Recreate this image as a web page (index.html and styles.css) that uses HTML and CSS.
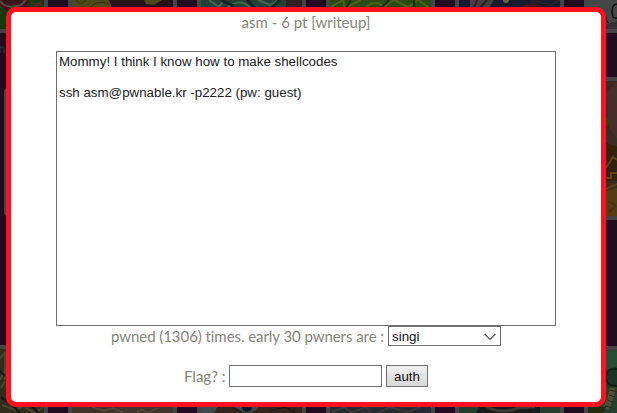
FILE: index.html
```html
<!DOCTYPE html>
<html lang="en">
<head>
<meta charset="utf-8">
<title>asm</title>
<link rel="stylesheet" href="styles.css">
</head>
<body>
<svg class="backdrop" width="617" height="413" viewBox="0 0 617 413" aria-hidden="true">
  <rect width="617" height="413" fill="#210c20"/>
  <g fill="#454345">
    <path d="M0 0h48v33H0zM68 0h109v33H68zM197 0h109v33H197zM326 0h109v33H326zM455 0h109v33H455zM584 0h33v33h-33zM584 77h33v143h-33z"/>
    <path d="M0 345h48v68H0zM68 345h109v68H68zM197 345h109v68H197zM326 345h109v68H326zM455 345h109v68H455zM584 346h33v67h-33z"/>
    <rect x="4" y="88" width="12" height="128" rx="4"/>
  </g>
  <path fill="#173a0c" d="M0 0h44v29H0z"/>
  <path fill="#3a1517" d="M0 0h29l-3 9-9 4L3 9 0 4z"/>
  <path d="M0 1l4 4 7 2 10-2 5-5" fill="none" stroke="#5d4541" stroke-width="2"/>
  <path d="M31 2l4 3 7-4M33 7l9-3" fill="none" stroke="#4e2920" stroke-width="2"/>
  <path fill="#271018" d="M72 0h101v8H72z"/>
  <path fill="#504719" d="M72 0h37l3 8H72zM144 0h18l-8 5-8-1z"/>
  <path d="M76 0q4 7 10 0M91 7q3-6 17-4" fill="none" stroke="#31300e"/>
  <path fill="#244137" d="M201 0h101v8H201z"/>
  <path d="M209 0l10 7 5-7M228 7q12-9 22 0M258 0l12 5 9-5" fill="none" stroke="#486450" stroke-width="2"/>
  <path d="M221 0l13 6M247 0l8 8M272 8l8-8" stroke="#142521" stroke-width="3"/>
  <path fill="#302024" d="M286 0h16v8h-16z"/>
  <path fill="#294d11" d="M330 0h101v8H330z"/>
  <path d="M331 7l12-7 2 8 16-8M366 7q9-8 18 0l10-7 14 7 10-7 10 7" fill="none" stroke="#4f5f17" stroke-width="2"/>
  <path d="M351 0l-5 8M389 0l-8 8M414 0v8" stroke="#172e0c" stroke-width="2"/>
  <path fill="#17192c" d="M459 0h101v8H459z"/>
  <path fill="#4b3b40" d="M470 0h24l-5 8h-19z"/>
  <path fill="#3d1819" d="M518 8l15-6 14 6z"/>
  <path d="M477 0l-3 8M487 0l-7 8M531 0l20 5 9-5" stroke="#26202b" stroke-width="2" fill="none"/>
  <circle cx="506" cy="0" r="3" fill="#64614e"/>
  <path fill="#454746" d="M588 0h29v29h-29z"/>
  <path fill="#303332" d="M588 23q12 4 29-2v8h-29z"/>
  <path d="M617 4q-5 0-5 8 0 7 5 6M606 17q0 6 3 5" fill="none" stroke="#111" stroke-width="1.5"/>
  <path fill="#382c23" d="M588 81h29v135h-29z"/>
  <path fill="#472e2a" d="M606 92l11-10v57l-8-11z"/>
  <path fill="#29401a" d="M606 116l4 4v5h-4z"/>
  <path fill="#34200f" d="M606 143l11 4v34h-11z"/>
  <path d="M606 168l7-11 4 3M606 178h5v-5h6M606 189l11-5M609 198l8-6" fill="none" stroke="#5e4313" stroke-width="2"/>
  <path fill="#563c11" d="M606 191l11-3v28h-11z"/>
  <path d="M608 201l7 4M609 212l7-6" stroke="#3d331e" stroke-width="2"/>
  <path fill="#302d1c" d="M0 349h44v64H0z"/>
  <path d="M0 358l5-5v18l-5 9M1 388l4-7M5 354v26M2 405l13 5 7-3M26 408l9 5 8-6" fill="none" stroke="#4a452f" stroke-width="2"/>
  <path d="M0 371l5 5M1 397l6 5M14 407l6 6M32 406l6 7" stroke="#15160f" stroke-width="2"/>
  <path fill="#41342a" d="M72 406h101v7H72z"/>
  <path d="M92 407l12 4 9-3 10 4M137 413q5-7 10 0l11-5" stroke="#524a36" fill="none" stroke-width="1.5"/>
  <path fill="#34241c" d="M201 406h101v7H201z"/>
  <path fill="#3c4a4c" d="M201 406h17l-4 7h-13zM234 406h25q-4 8-17 7z"/>
  <circle cx="247" cy="407" r="5" fill="#121722"/>
  <path d="M232 407l12 6M270 411l15-4 10 5" stroke="#15171a" fill="none"/>
  <path fill="#262b32" d="M330 406h101v7H330z"/>
  <path d="M332 412l13-5 6 6 15-6 5 6M378 413l12-6 18 5 12-5" stroke="#3c3834" fill="none" stroke-width="2"/>
  <path fill="#243d2b" d="M459 406h101v7H459z"/>
  <path fill="#181c1c" d="M480 406h60v7h-64z"/>
  <path d="M485 406q17 9 33 2l17-1" fill="none" stroke="#40392e" stroke-width="3"/>
  <path fill="#1f402a" d="M588 350h29v63h-29z"/>
  <path fill="#284d35" d="M606 351h11v15l-11 4z"/>
  <path d="M617 369q-11-1-11 8 0 10 11 9" fill="#1b3427" stroke="#101c17" stroke-width="2"/>
  <path d="M613 388q-2 11-7 21" fill="none" stroke="#534d34" stroke-width="6"/>
  <path d="M610 390l7 2M609 395l6 2M607 400l6 2M605 406l7 2" stroke="#252b1c"/>
  <path fill="#232b10" d="M588 407h18l-3 6h-15z"/>
  <path d="M0 46v7M0 48q4-3 4 1v4" fill="none" stroke="#34404f"/>
</svg>
<main class="dialog">
  <h1 class="title">asm - 6 pt [writeup]</h1>
  <textarea class="description" readonly spellcheck="false">Mommy! I think I know how to make shellcodes

ssh asm@pwnable.kr -p2222 (pw: guest)</textarea>
  <div class="row pwners">
    <span class="label pwners-label">pwned (1306) times. early 30 pwners are :</span>
    <div class="select">
      <span>singi</span>
      <svg width="12" height="8" viewBox="0 0 12 8"><path d="M.7 1l5.3 5.4L11.3 1" fill="none" stroke="#555" stroke-width="1.1"/></svg>
    </div>
  </div>
  <form class="row flag">
    <label class="label flag-label" for="flag">Flag? :</label>
    <input class="flag-input" id="flag" type="text">
    <button class="auth" type="button">auth</button>
  </form>
</main>
</body>
</html>
```
FILE: styles.css
```css
* { box-sizing: border-box; }

body {
  margin: 0;
  height: 413px;
  padding: 7px 0 0 6px;
  overflow: hidden;
  background: #210c20;
}

.backdrop {
  position: absolute;
  top: 0;
  left: 0;
  z-index: -1;
}

.dialog {
  display: flex;
  flex-direction: column;
  align-items: center;
  width: 600px;
  height: 400px;
  border: 5px solid #ff1122;
  border-radius: 10px;
  background: #fff;
}

.title, .label {
  margin: 0;
  font: 400 15px/20px Lato, sans-serif;
  color: #85857a;
  white-space: nowrap;
}

.title { height: 39px; }

.pwners-label { letter-spacing: -0.06px; }

.description {
  display: block;
  width: 500px;
  height: 275px;
  padding: 2px;
  border: 1px solid #6e6e6e;
  border-radius: 0;
  outline: 0;
  resize: none;
  overflow: hidden;
  background: #fff;
  color: #202020;
  font: 13.33px/15.5px "Liberation Sans", Arial, sans-serif;
}

.row {
  display: flex;
  align-items: center;
}

.pwners {
  width: 390px;
  height: 20px;
  justify-content: space-between;
}

.select {
  display: flex;
  align-items: center;
  justify-content: space-between;
  width: 113px;
  height: 20px;
  padding: 1px 4px 0 3px;
  border: 1px solid #6e6e6e;
  color: #111;
  font: 13.33px/18px "Liberation Sans", Arial, sans-serif;
}

.flag {
  width: 244px;
  height: 22px;
  margin-top: 19px;
}

.flag-label { width: 45px; }

.flag-input {
  width: 153px;
  height: 22px;
  margin-right: 4px;
  padding: 1px 3px;
  border: 1px solid #6e6e6e;
  outline: 0;
}

.auth {
  width: 42px;
  height: 22px;
  padding: 1px 0 0;
  border: 1px solid #707070;
  border-radius: 0;
  background: linear-gradient(#f0f0f0, #d8d8d8);
  color: #111;
  font: 13.33px/20px "Liberation Sans", Arial, sans-serif;
}
```
